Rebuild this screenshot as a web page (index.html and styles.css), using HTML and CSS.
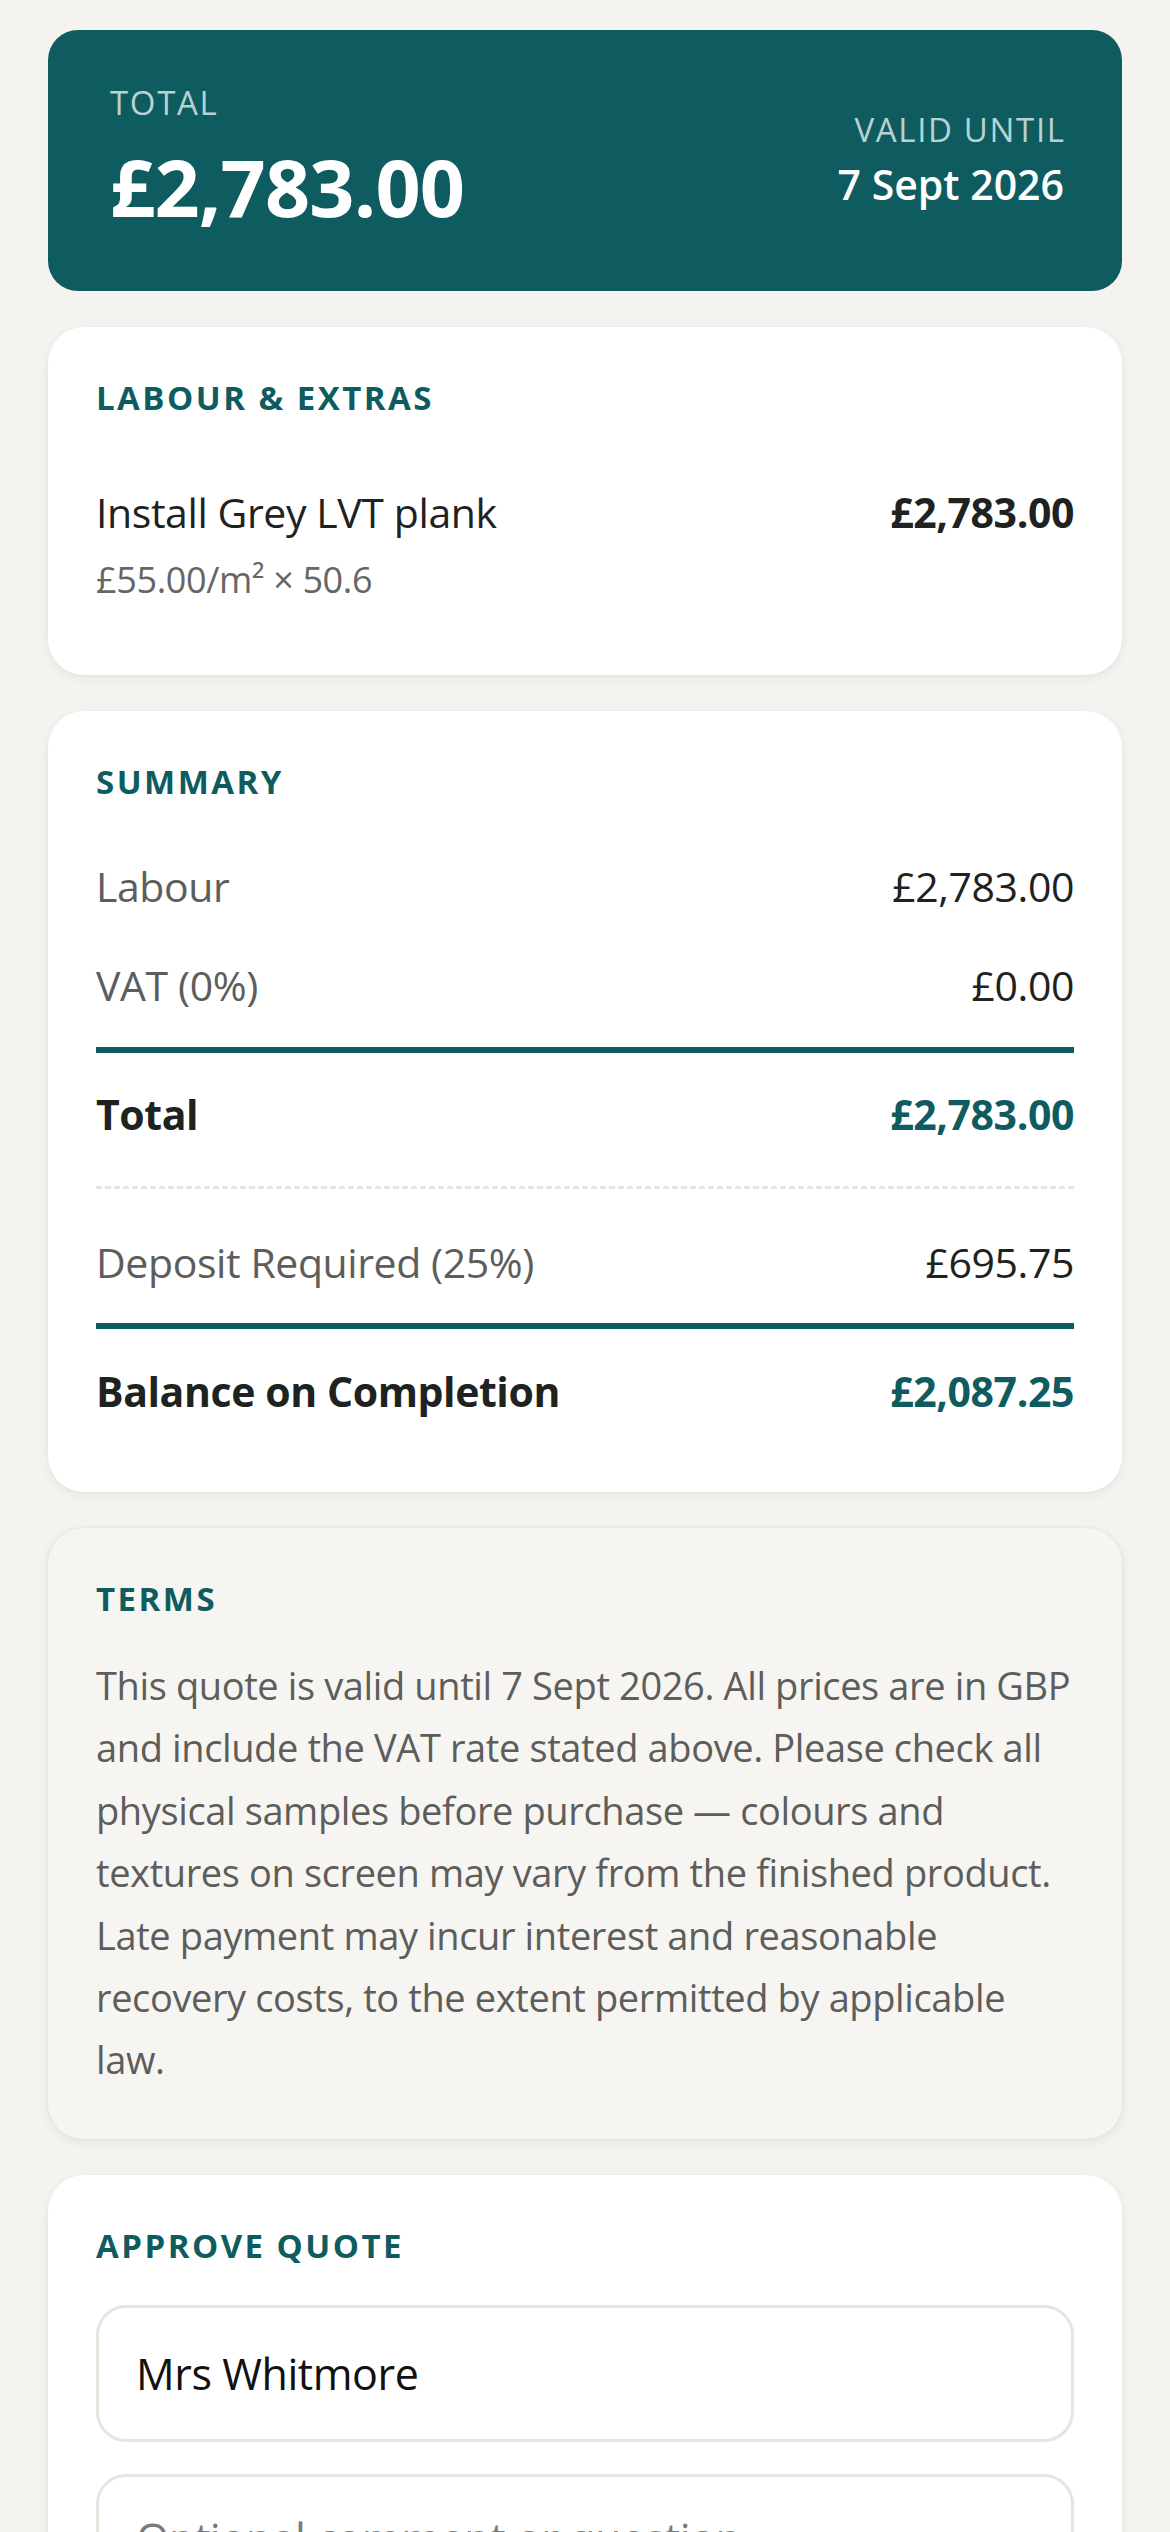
FILE: index.html
```html
<!DOCTYPE html>
<html lang="en">
<head>
<meta charset="utf-8">
<title>Quote</title>
<link rel="stylesheet" href="styles.css">
</head>
<body>
<main class="page">
  <section class="hero">
    <div class="hero-left">
      <div class="hero-label">TOTAL</div>
      <div class="hero-amount">£2,783.00</div>
    </div>
    <div class="hero-right">
      <div class="hero-label">VALID UNTIL</div>
      <div class="hero-date">7 Sept 2026</div>
    </div>
  </section>

  <section class="card">
    <h2 class="card-title">LABOUR &amp; EXTRAS</h2>
    <div class="item">
      <div class="item-main">
        <div class="item-name">Install Grey LVT plank</div>
        <div class="item-sub">£55.00/m² × 50.6</div>
      </div>
      <div class="item-price">£2,783.00</div>
    </div>
  </section>

  <section class="card">
    <h2 class="card-title">SUMMARY</h2>
    <div class="sum-row">
      <span class="sum-key">Labour</span>
      <span class="sum-val">£2,783.00</span>
    </div>
    <div class="sum-row">
      <span class="sum-key">VAT (0%)</span>
      <span class="sum-val">£0.00</span>
    </div>
    <div class="sum-row sum-total">
      <span class="sum-key">Total</span>
      <span class="sum-val">£2,783.00</span>
    </div>
    <div class="sum-row sum-deposit">
      <span class="sum-key">Deposit Required (25%)</span>
      <span class="sum-val">£695.75</span>
    </div>
    <div class="sum-row sum-balance">
      <span class="sum-key">Balance on Completion</span>
      <span class="sum-val">£2,087.25</span>
    </div>
  </section>

  <section class="card card-muted">
    <h2 class="card-title">TERMS</h2>
    <p class="terms">This quote is valid until 7 Sept 2026. All prices are in GBP<br>and include the VAT rate stated above. Please check all<br>physical samples before purchase — colours and<br>textures on screen may vary from the finished product.<br>Late payment may incur interest and reasonable<br>recovery costs, to the extent permitted by applicable<br>law.</p>
  </section>

  <section class="card">
    <h2 class="card-title card-title-form">APPROVE QUOTE</h2>
    <div class="form">
      <input class="field" type="text" value="Mrs Whitmore">
      <textarea class="field field-area" placeholder="Optional comment or question"></textarea>
    </div>
  </section>
</main>
</body>
</html>
```

FILE: styles.css
```css
* {
  box-sizing: border-box;
}

html, body {
  margin: 0;
  padding: 0;
}

body {
  background: #f4f3ef;
  font-family: "Open Sans", "Noto Sans", "Liberation Sans", sans-serif;
  color: #1e2220;
}

.page {
  padding: 30px 48px 48px;
  display: flex;
  flex-direction: column;
  gap: 36px;
}

/* Hero */
.hero {
  background: #0f5c60;
  border-radius: 30px;
  padding: 49px 58px 50px 62px;
  display: flex;
  justify-content: space-between;
  align-items: center;
  color: #ffffff;
}

.hero-label {
  font-size: 33px;
  line-height: 48px;
  font-weight: 500;
  letter-spacing: 0.05em;
  color: #b8d2d2;
}

.hero-right .hero-label {
  margin-right: -0.05em;
}

.hero-amount {
  font-size: 79px;
  line-height: 108px;
  font-weight: 700;
  margin-top: 6px;
  letter-spacing: -0.01em;
}

.hero-right {
  text-align: right;
}

.hero-date {
  font-size: 41px;
  line-height: 60px;
  font-weight: 600;
}

/* Cards */
.card {
  background: #ffffff;
  border-radius: 36px;
  padding: 48px;
  box-shadow: 0 3px 12px rgba(40, 35, 20, 0.06), 0 1px 3px rgba(40, 35, 20, 0.04);
}

.card-muted {
  background: #f6f5f1;
  box-shadow: 0 3px 12px rgba(40, 35, 20, 0.07), 0 0 0 2px rgba(40, 35, 20, 0.02);
}

.card-title {
  margin: 0 0 33px;
  font-size: 33px;
  line-height: 45px;
  font-weight: 700;
  letter-spacing: 0.075em;
  color: #0f5c60;
}

.card-title-form {
  margin-bottom: 37px;
}

/* Line item */
.item {
  display: flex;
  justify-content: space-between;
  align-items: flex-start;
  padding: 28px 0 20px;
}

.item-name {
  font-size: 41px;
  line-height: 63px;
  letter-spacing: -0.01em;
  color: #1e2220;
}

.item-sub {
  margin-top: 8px;
  font-size: 36px;
  line-height: 55px;
  letter-spacing: -0.01em;
  color: #666664;
}

.item-price {
  font-size: 41px;
  line-height: 63px;
  font-weight: 700;
  letter-spacing: -0.01em;
  color: #1e2220;
}

/* Summary */
.sum-row {
  display: flex;
  justify-content: space-between;
  align-items: baseline;
  padding: 18px 0;
  font-size: 41px;
  line-height: 63px;
  letter-spacing: -0.01em;
}

.sum-key {
  color: #5d5d5b;
}

.sum-val {
  color: #1e2220;
}

.sum-total {
  margin-top: 12px;
  border-top: 6px solid #0f5c60;
  padding: 30px 0 40px;
  border-bottom: 3px dashed #e8e5de;
  font-weight: 700;
}

.sum-total .sum-key,
.sum-balance .sum-key {
  color: #1e2220;
}

.sum-total .sum-val,
.sum-balance .sum-val {
  color: #0f5c60;
}

.sum-deposit {
  padding-top: 42px;
}

.sum-balance {
  margin-top: 11px;
  border-top: 6px solid #0f5c60;
  padding-top: 31px;
  padding-bottom: 21px;
  font-weight: 700;
}

/* Terms */
.terms {
  margin: 0;
  font-size: 38px;
  line-height: 62.4px;
  letter-spacing: -0.01em;
  color: #5d5d5b;
}

/* Form */
.form {
  display: flex;
  flex-direction: column;
  gap: 32px;
}

.field {
  display: block;
  width: 100%;
  height: 137px;
  padding: 0 37px;
  border: 3px solid #e8e5de;
  border-radius: 30px;
  background: #ffffff;
  font-family: inherit;
  font-size: 43px;
  letter-spacing: -0.01em;
  color: #111111;
  outline: none;
}

.field-area {
  height: 240px;
  padding: 32px 37px;
  line-height: 60px;
  resize: none;
}

.field-area::placeholder {
  color: #7a7a78;
}
```
